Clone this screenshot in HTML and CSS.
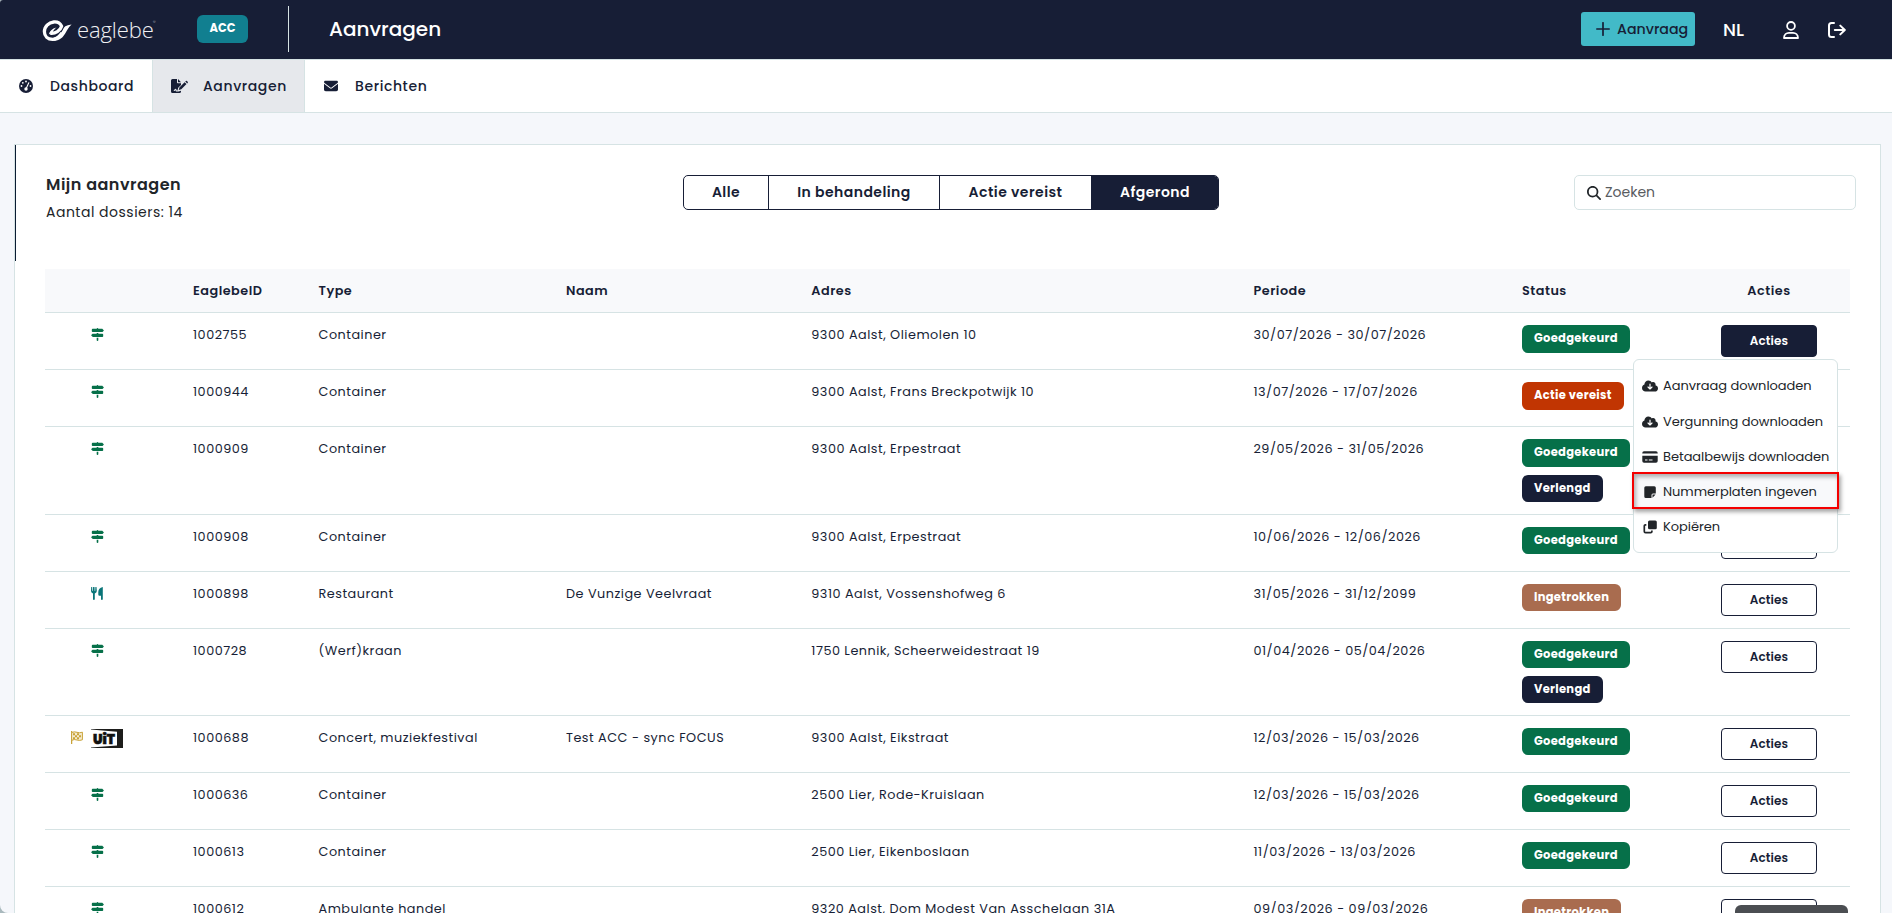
FILE: index.html
```html
<!DOCTYPE html>
<html lang="nl">
<head>
<meta charset="utf-8">
<title>Aanvragen</title>
<link rel="stylesheet" href="styles.css">
</head>
<body>
<svg class="sprite" aria-hidden="true">
  <symbol id="sign" viewBox="0 0 512 512"><path d="M224 32H64C46.3 32 32 46.3 32 64v64c0 17.7 14.3 32 32 32H441.4c4.2 0 8.3-1.7 11.3-4.7l48-48c6.2-6.2 6.2-16.4 0-22.6l-48-48c-3-3-7.1-4.7-11.3-4.7H288c0-17.7-14.3-32-32-32s-32 14.3-32 32zM480 256c0-17.7-14.3-32-32-32H288V192H224v32H70.6c-4.2 0-8.3 1.7-11.3 4.7l-48 48c-6.2 6.2-6.2 16.4 0 22.6l48 48c3 3 7.1 4.7 11.3 4.7H448c17.7 0 32-14.3 32-32V256zM288 480V384H224v96c0 17.7 14.3 32 32 32s32-14.3 32-32z"/></symbol>
  <symbol id="cloud" viewBox="0 0 640 512"><path d="M144 480C64.5 480 0 415.5 0 336c0-62.8 40.2-116.2 96.2-135.9c-.1-2.7-.2-5.4-.2-8.1c0-88.4 71.6-160 160-160c59.3 0 111 32.2 138.7 80.2C409.9 102 428.3 96 448 96c53 0 96 43 96 96c0 12.2-2.3 23.8-6.4 34.6C596 238.4 640 290.1 640 352c0 70.7-57.3 128-128 128H144zm79-167l80 80c9.4 9.4 24.6 9.4 33.9 0l80-80c9.4-9.4 9.4-24.6 0-33.9s-24.6-9.4-33.9 0l-39 39V184c0-13.3-10.7-24-24-24s-24 10.7-24 24V318.1l-39-39c-9.4-9.4-24.6-9.4-33.9 0s-9.4 24.6 0 33.9z"/></symbol>
</svg>

<div class="page">
<header class="topbar">
  <div class="logo">
    <svg width="30" height="24" viewBox="0 0 30 24"><path d="M8.200 14.200C13.500 14.800 18.200 11.800 19.600 7.200C18 3.900 15 2.700 11.800 3C6.500 3.500 2.400 7.700 2.400 12.800C2.400 17.200 5.800 20.300 10.600 20.300C15.200 20.200 18 17 20 14" fill="none" stroke="#fff" stroke-width="3.300" stroke-linejoin="round"/><path fill="#fff" d="M11 21.900C17.500 22 21 18.500 23.500 14C25.500 10.400 27 8 29.600 5.600C26 6.400 23 6.500 21.500 9.500C19.500 13.500 17 17.500 12 18.700ZM6.800 15.600C7.500 12.200 10 9.600 14.500 8.500C12.600 10 11.500 11.300 10.700 13.200Z"/></svg>
    <span class="logo-text">eaglebe</span><span class="logo-reg">®</span>
  </div>
  <span class="env">ACC</span>
  <span class="divider"></span>
  <h1 class="heading">Aanvragen</h1>
  <div class="tools">
    <button class="new"><svg width="14" height="14" viewBox="0 0 14 14"><path d="M7 .8v12.400M.8 7h12.400" fill="none" stroke="#171e36" stroke-width="1.700" stroke-linecap="round"/></svg><span>Aanvraag</span></button>
    <span class="lang">NL</span>
    <svg class="user" width="16" height="18" viewBox="0 0 16 18" fill="none" stroke="#fff" stroke-width="1.800"><circle cx="8" cy="4.900" r="3.900"/><path stroke-linejoin="round" d="M1 17C1 13.500 3.500 11.800 6 11.800h4C12.500 11.800 15 13.500 15 17Z"/></svg>
    <svg class="exit" width="18" height="16" viewBox="0 0 18 16" fill="none" stroke="#fff" stroke-width="2" stroke-linecap="round" stroke-linejoin="round"><path d="M6 1H3.500Q1 1 1 3.500V12.500Q1 15 3.500 15H6M6.800 8H16.500M12.300 3.600L16.800 8L12.300 12.400"/></svg>
  </div>
</header>

<nav class="nav">
  <a class="tab t1"><svg width="14" height="14" viewBox="0 0 14 14"><circle cx="7" cy="7" r="7" fill="#171e36"/><g fill="#fff"><circle cx="7" cy="2.500" r=".9"/><circle cx="3.800" cy="3.800" r=".9"/><circle cx="2.500" cy="7" r=".9"/><circle cx="11.500" cy="7" r=".9"/><circle cx="7" cy="10" r="1.700"/></g><path d="M7.200 9.500L9.800 3.800" stroke="#fff" stroke-width="1.100" stroke-linecap="round"/></svg><span>Dashboard</span></a>
  <a class="tab t2 on"><svg width="17" height="14" viewBox="0 0 17 14"><path fill="#171e36" d="M0 1.500Q0 0 1.500 0H6V3.500Q6 4.300 6.800 4.300H10V6L7.200 8.800L6.500 11.500H5.800L5.300 10.300Q4.800 9.300 3.900 10.100L2.500 12H3.600L4.500 11.200L5 12.500H7.500L10 11.800V12.500Q10 14 8.500 14H1.500Q0 14 0 12.500ZM7 0L10 3.300H7ZM13.600 3.200L15.500 5.100L10.300 10.300L7.800 11L8.400 8.400ZM14.300 2.500L14.700 2.100Q15.300 1.500 16 2.100L16.600 2.700Q17.200 3.400 16.600 4L16.200 4.400Z"/></svg><span>Aanvragen</span></a>
  <a class="tab t3"><svg width="14" height="14" viewBox="0 0 512 512"><path fill="#171e36" d="M48 64C21.500 64 0 85.500 0 112c0 15.100 7.100 29.300 19.200 38.400L236.800 313.600c11.400 8.500 27 8.500 38.400 0L492.800 150.400c12.100-9.100 19.200-23.300 19.200-38.400c0-26.500-21.500-48-48-48H48zM0 176V384c0 35.300 28.700 64 64 64H448c35.300 0 64-28.700 64-64V176L294.400 339.200c-22.800 17.100-54 17.100-76.800 0L0 176z"/></svg><span>Berichten</span></a>
</nav>

<main class="card">
  <section class="card-head">
    <div class="titles"><h2>Mijn aanvragen</h2><p>Aantal dossiers: 14</p></div>
    <div class="filters"><span class="f1">Alle</span><span class="f2">In behandeling</span><span class="f3">Actie vereist</span><span class="f4 on">Afgerond</span></div>
    <div class="search"><svg width="14" height="14" viewBox="0 0 512 512"><path fill="#212529" d="M416 208c0 45.900-14.900 88.300-40 122.700L502.600 457.400c12.500 12.500 12.500 32.800 0 45.300s-32.800 12.500-45.300 0L330.700 376c-34.400 25.200-76.800 40-122.700 40C93.100 416 0 322.900 0 208S93.100 0 208 0S416 93.100 416 208zM208 352a144 144 0 1 0 0-288 144 144 0 1 0 0 288z"/></svg><span>Zoeken</span></div>
  </section>

  <section class="table">
    <div class="row head"><span></span><span>EaglebeID</span><span>Type</span><span>Naam</span><span>Adres</span><span>Periode</span><span>Status</span><span class="mid">Acties</span></div>
    <div class="row"><span class="ic"><svg class="sign"><use href="#sign"/></svg></span><span>1002755</span><span>Container</span><span></span><span>9300 Aalst, Oliemolen 10</span><span>30/07/2026 - 30/07/2026</span><span class="st"><b class="pill ok">Goedgekeurd</b></span>
      <span class="act"><button class="btn on">Acties</button>
        <ul class="menu">
          <li class="first"><svg width="16" height="14"><use href="#cloud"/></svg><span>Aanvraag downloaden</span></li>
          <li><svg width="16" height="14"><use href="#cloud"/></svg><span>Vergunning downloaden</span></li>
          <li><svg width="16" height="14" viewBox="0 0 16 14"><path fill="#212529" fill-rule="evenodd" d="M.3 3.500V3Q.3 1.200 2 1.200H14Q15.700 1.200 15.700 3V3.500ZM.3 5.700H15.700V11Q15.700 12.800 14 12.800H2Q.3 12.800 .3 11ZM3 9.500V10.400H5.500V9.500ZM6.800 9.500V10.400H10.500V9.500Z"/></svg><span>Betaalbewijs downloaden</span></li>
          <li class="hot"><svg width="16" height="14" viewBox="0 0 16 14"><path fill="#212529" d="M2.300 2.800Q2.300 1.300 3.800 1.300H12.300Q13.800 1.300 13.800 2.800V8.600H11Q9.500 8.600 9.500 10.100V12.900H3.800Q2.300 12.900 2.300 11.400ZM10.500 12.700V9.600H13.600Z"/></svg><span>Nummerplaten ingeven</span></li>
          <li><svg width="16" height="14" viewBox="0 0 16 14"><rect x="6" y=".5" width="8.800" height="8.800" rx="1.500" fill="#212529"/><path d="M4.300 4.800H3.500Q2.300 4.800 2.300 6V11.500Q2.300 12.700 3.500 12.700H8.700Q9.900 12.700 9.900 11.500V10.500" fill="none" stroke="#212529" stroke-width="1.700"/></svg><span>Kopiëren</span></li>
        </ul>
      </span></div>
    <div class="row"><span class="ic"><svg class="sign"><use href="#sign"/></svg></span><span>1000944</span><span>Container</span><span></span><span>9300 Aalst, Frans Breckpotwijk 10</span><span>13/07/2026 - 17/07/2026</span><span class="st"><b class="pill need">Actie vereist</b></span><span class="act"></span></div>
    <div class="row tall"><span class="ic"><svg class="sign"><use href="#sign"/></svg></span><span>1000909</span><span>Container</span><span></span><span>9300 Aalst, Erpestraat</span><span>29/05/2026 - 31/05/2026</span><span class="st"><b class="pill ok">Goedgekeurd</b><b class="pill ext">Verlengd</b></span><span class="act"></span></div>
    <div class="row"><span class="ic"><svg class="sign"><use href="#sign"/></svg></span><span>1000908</span><span>Container</span><span></span><span>9300 Aalst, Erpestraat</span><span>10/06/2026 - 12/06/2026</span><span class="st"><b class="pill ok">Goedgekeurd</b></span><span class="act"><button class="btn">Acties</button></span></div>
    <div class="row"><span class="ic"><svg width="12" height="13" viewBox="0 0 12 13" fill="#0a7578"><path d="M.2 0H1.200L1.400 4H1.900L2.100 0H3.500L3.700 4H4.200L4.400 0H5.500L5.800 4Q5.800 5.800 3.800 6.400V12Q3.800 13 2.900 13T2 12V6.400Q0 5.800 0 4ZM11.800 .5V12Q11.800 13 10.900 13T10 12V8.800H8.500Q7.300 8.800 7.300 7.600V5Q7.300 1.200 11.800 0Z"/></svg></span><span>1000898</span><span>Restaurant</span><span>De Vunzige Veelvraat</span><span>9310 Aalst, Vossenshofweg 6</span><span>31/05/2026 - 31/12/2099</span><span class="st"><b class="pill gone">Ingetrokken</b></span><span class="act"><button class="btn">Acties</button></span></div>
    <div class="row tall2"><span class="ic"><svg class="sign"><use href="#sign"/></svg></span><span>1000728</span><span>(Werf)kraan</span><span></span><span>1750 Lennik, Scheerweidestraat 19</span><span>01/04/2026 - 05/04/2026</span><span class="st"><b class="pill ok">Goedgekeurd</b><b class="pill ext">Verlengd</b></span><span class="act"><button class="btn">Acties</button></span></div>
    <div class="row"><span class="ic"><svg width="12" height="13" viewBox="0 0 12 13"><path d="M.6 0V13" stroke="#c9a339" stroke-width="1.300"/><path d="M.6 1.500Q3.500 .3 6 1.300T11.400 1.200V8.800Q8.500 10 6 9T.6 9.300Z" fill="#f5ebcf" stroke="#c9a339"/><path d="M2 2.200h2v2h-2zM6 2.200h2v2h-2zM4 4.200h2v2h-2zM8 4.200h2v2h-2zM2 6.200h2v2h-2zM6 6.200h2v2h-2z" fill="#c9a339"/></svg><svg class="uit" width="32" height="19" viewBox="0 0 32 19"><path fill="#1d1d1b" d="M0 0H32V19H0V18.400L26 16.500V2.800L0 .6Z"/><text x="2" y="14.800" textLength="22" lengthAdjust="spacingAndGlyphs">UiT</text></svg></span><span>1000688</span><span>Concert, muziekfestival</span><span>Test ACC - sync FOCUS</span><span>9300 Aalst, Eikstraat</span><span>12/03/2026 - 15/03/2026</span><span class="st"><b class="pill ok">Goedgekeurd</b></span><span class="act"><button class="btn">Acties</button></span></div>
    <div class="row"><span class="ic"><svg class="sign"><use href="#sign"/></svg></span><span>1000636</span><span>Container</span><span></span><span>2500 Lier, Rode-Kruislaan</span><span>12/03/2026 - 15/03/2026</span><span class="st"><b class="pill ok">Goedgekeurd</b></span><span class="act"><button class="btn">Acties</button></span></div>
    <div class="row"><span class="ic"><svg class="sign"><use href="#sign"/></svg></span><span>1000613</span><span>Container</span><span></span><span>2500 Lier, Eikenboslaan</span><span>11/03/2026 - 13/03/2026</span><span class="st"><b class="pill ok">Goedgekeurd</b></span><span class="act"><button class="btn">Acties</button></span></div>
    <div class="row"><span class="ic"><svg class="sign"><use href="#sign"/></svg></span><span>1000612</span><span>Ambulante handel</span><span></span><span>9320 Aalst, Dom Modest Van Asschelaan 31A</span><span>09/03/2026 - 09/03/2026</span><span class="st"><b class="pill gone">Ingetrokken</b></span><span class="act"><button class="btn" aria-label="Acties"></button></span></div>
  </section>
</main>
<div class="widget"></div>
</div>
</body>
</html>
```
FILE: styles.css
```css
* { box-sizing: border-box; }
html { background: #a9b9bd; overflow: hidden; }
body {
  margin: 0;
  font-family: Poppins, Inter, "Open Sans", sans-serif;
  color: #171e36;
}
h1, h2, p, ul { margin: 0; padding: 0; }
button { font: inherit; }
svg { display: block; flex: none; }
.sprite { position: absolute; width: 0; height: 0; }
.page {
  position: relative;
  height: 913px;
  overflow: hidden;
  background: #f5f7fb;
  border-radius: 3px 0 0 8px;
}

/* top bar */
.topbar { display: flex; height: 59px; background: #171e36; color: #fff; }
.logo { display: flex; width: 197px; padding: 19px 0 0 42px; }
.logo-text {
  margin-left: 5px; height: 24px; line-height: 20px;
  font-family: "Open Sans", sans-serif; font-weight: 300; font-size: 22px;
  letter-spacing: -.1px; color: #f0f1f4;
}
.logo-reg { margin-left: -1px; font-size: 6px; line-height: 6px; color: #b4b8c2; }
.env {
  width: 51px; height: 28px; margin-top: 15px; border-radius: 6px;
  background: #117f90; text-align: center; font-size: 11.5px; font-weight: 700; line-height: 26px;
}
.divider { width: 1px; height: 46px; margin: 6px 0 0 40px; background: #d6e3e4; }
.heading { margin-left: 40px; font-size: 20px; font-weight: 500; line-height: 58px; }
.tools { display: flex; margin-left: auto; padding-right: 46px; }
.new {
  display: flex; align-items: center; width: 114px; height: 34px; margin-top: 12px; padding: 0 0 0 15px;
  border: 0; border-radius: 3px; background: #42bac8; color: #171e36;
}
.new svg { margin-top: -1px; }
.new span { margin-left: 7px; font-size: 14.2px; font-weight: 500; }
.lang { width: 60px; margin-left: 28px; font-size: 18px; font-weight: 500; line-height: 60px; }
.user { margin-top: 21px; }
.exit { margin: 22px 0 0 29px; }

/* navigation */
.nav { display: flex; height: 54px; border-top: 1px solid #d6e3e4; border-bottom: 1px solid #d6e3e4; background: #fff; }
.tab {
  display: flex; align-items: center; border-right: 1px solid #d6e3e4;
  font-size: 14px; font-weight: 500; letter-spacing: .6px;
}
.tab svg { margin-top: -1px; }
.t1 { width: 153px; padding-left: 19px; }
.t1 span { margin-left: 17px; }
.t2 { width: 152px; padding-left: 18px; }
.t2 span { margin-left: 15px; }
.t2.on { background: #e6e8ec; }
.t3 { padding-left: 19px; border-right: 0; }
.t3 span { margin-left: 17px; }

/* card */
.card { margin: 31px 11px 0 14px; height: 780px; background: #fff; border: 1px solid #d6e3e4; }
.card-head { display: flex; height: 116px; padding: 30px 24px 0 30px; border-left: 1px solid #0b1c33; }
.titles { width: 637px; }
.titles h2 { font-size: 16px; font-weight: 600; line-height: 20px; letter-spacing: .5px; color: #212529; }
.titles p { margin-top: 7px; font-size: 14px; line-height: 20px; letter-spacing: .5px; color: #212529; }
.filters {
  display: flex; width: 536px; height: 35px; border: 1px solid #171e36; border-radius: 5px; overflow: hidden;
  font-size: 14px; font-weight: 600; line-height: 33px; text-align: center; letter-spacing: .45px;
}
.filters span { border-right: 1px solid #171e36; }
.f1 { width: 85px; }
.f2 { width: 171px; }
.f3 { width: 152px; }
.f4 { flex: 1; }
.filters .on { background: #171e36; color: #fff; border: 0; }
.search {
  display: flex; width: 282px; height: 35px; margin-left: auto; padding-left: 12px;
  border: 1px solid #d6e3e4; border-radius: 5px; font-size: 14px; line-height: 33px; color: #595c5f;
}
.search svg { margin: 10px 4px 0 0; }

/* table */
.table { margin: 8px 30px 0 30px; }
.row {
  display: grid; grid-template-columns: 148px 125.5px 247.5px 245.3px 442.2px 268.5px 166px 162px;
  height: 57px; padding-top: 12px; border-bottom: 1px solid #d6e3e4;
  font-size: 12.8px; line-height: 20px; letter-spacing: .5px; white-space: nowrap;
}
.tall { height: 88px; }
.tall2 { height: 87px; }
.head { height: 44px; background: #f8f9fb; font-weight: 600; }
.mid { text-align: center; }
.ic { display: flex; justify-content: center; width: 104px; padding-top: 3px; }
.sign { width: 13px; height: 13px; fill: #067049; }
.uit { margin: -2px 0 0 8px; }
.uit text { font-size: 14px; font-weight: 900; letter-spacing: 0; fill: #111; stroke: #111; stroke-width: .5; }
.st { display: flex; flex-direction: column; align-items: flex-start; gap: 8px; }
.pill {
  height: 28px; padding: 0 12px; border-radius: 6px; color: #fff;
  font-size: 11.5px; font-weight: 700; line-height: 26px; letter-spacing: .3px;
}
.row:nth-child(n+5) .pill { height: 27px; }
.ok { width: 108px; background: #067049; }
.need { width: 102px; background: #c13502; }
.row .ext { width: 81px; height: 27px; background: #171e36; }
.gone { width: 99px; background: #a96c4f; }
.act { position: relative; width: 162px; }
.btn {
  display: block; width: 96px; height: 32px; margin: 0 auto; padding: 0; border: 1px solid #171e36; border-radius: 4px;
  background: #fff; color: #171e36; font-size: 12px; font-weight: 600; line-height: 28px; letter-spacing: .1px;
}
.btn.on { background: #171e36; color: #fff; }

/* row menu */
.menu {
  position: absolute; z-index: 2; right: 12px; top: 34px; width: 205px; height: 194px; padding-top: 8px;
  list-style: none; background: #fff; border: 1px solid #d6e3e4; border-radius: 6px;
  color: #212529; font-size: 13px; letter-spacing: -.04px;
}
.menu li { display: flex; align-items: center; height: 35.3px; padding-left: 8px; }
.menu .first { margin-bottom: .6px; }
.menu svg { margin-right: 5px; fill: #212529; }
.menu .hot {
  width: 207px; height: 37px; margin: -2.2px 0 0 -2px; padding: 2px 0 0 8px; background: #f8f9fb;
  border: 2px solid #f40000; box-shadow: 2px 3px 4px rgba(0,0,0,.35), inset 2px 3px 4px rgba(0,0,0,.3);
}

.widget { position: absolute; right: 44px; bottom: 0; width: 113px; height: 8px; background: #4b4e52; border-radius: 6px 6px 0 0; }
```
